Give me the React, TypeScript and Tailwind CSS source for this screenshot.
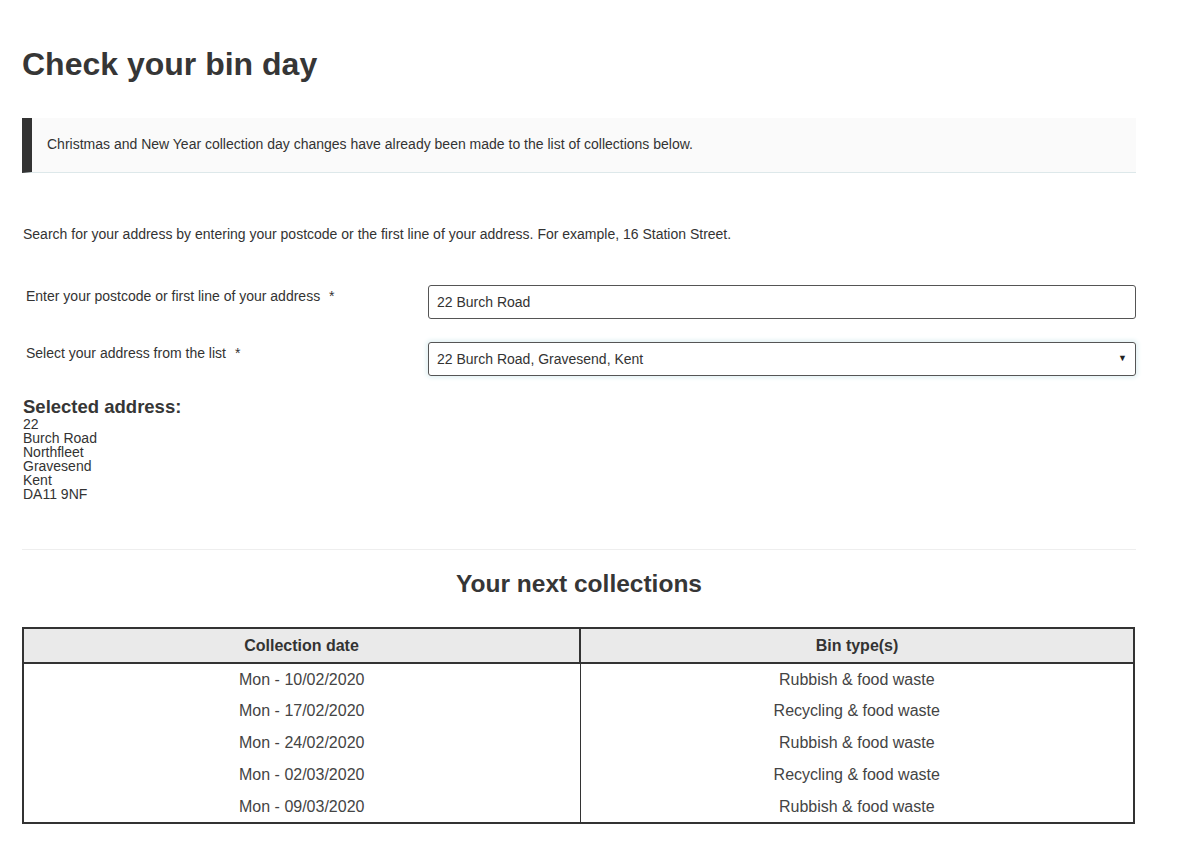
const address = ['22', 'Burch Road', 'Northfleet', 'Gravesend', 'Kent', 'DA11 9NF'];

const collections = [
  { date: 'Mon - 10/02/2020', bins: 'Rubbish & food waste' },
  { date: 'Mon - 17/02/2020', bins: 'Recycling & food waste' },
  { date: 'Mon - 24/02/2020', bins: 'Rubbish & food waste' },
  { date: 'Mon - 02/03/2020', bins: 'Recycling & food waste' },
  { date: 'Mon - 09/03/2020', bins: 'Rubbish & food waste' },
];

export default function App() {
  return (
    <div className="min-h-screen bg-white font-['Liberation_Sans',Arial,sans-serif] text-[#333]">
      <div className="w-[1114px] ml-[22px] pt-[45px] pb-[34px]">
        {/* Title */}
        <h1 className="text-[32px] leading-[38px] font-bold text-[#363636]">Check your bin day</h1>

        {/* Notice */}
        <div className="mt-[35px] flex h-[55px] items-center border-l-[10px] border-[#333] bg-[#fafafa] border-b border-b-[#dde8ea] pl-[15px] pb-[2px] text-[14px] text-[#333]">
          Christmas and New Year collection day changes have already been made to the list of collections below.
        </div>

        <p className="mt-[53px] pl-[1px] text-[14px] leading-[16px] text-[#333]">
          Search for your address by entering your postcode or the first line of your address. For example, 16 Station Street.
        </p>

        {/* Form */}
        <div className="mt-[43px] flex flex-col gap-[23px]">
          <div className="grid grid-cols-[406px_1fr]">
            <label className="pl-[4px] pt-[3px] text-[14px] leading-[16px] text-[#333]">
              Enter your postcode or first line of your address <span className="ml-[5px]">*</span>
            </label>
            <div className="flex h-[34px] items-center rounded-[3px] border border-[#555] px-[8px] text-[14px] text-[#333]">
              22 Burch Road
            </div>
          </div>
          <div className="grid grid-cols-[406px_1fr]">
            <label className="pl-[4px] pt-[3px] text-[14px] leading-[16px] text-[#333]">
              Select your address from the list <span className="ml-[5px]">*</span>
            </label>
            <div className="flex h-[34px] items-center justify-between rounded-[3px] border border-[#555] px-[8px] text-[14px] text-[#333] shadow-[0_0_4px_2px_#e3f1f3]">
              <span>22 Burch Road, Gravesend, Kent</span>
              <span className="text-[9px] text-[#222]">▼</span>
            </div>
          </div>
        </div>

        {/* Selected address */}
        <div className="mt-[21px] pl-[1px]">
          <h3 className="text-[18.5px] leading-[20px] font-bold text-[#363636]">Selected address:</h3>
          <div className="text-[14px] leading-[14px] text-[#333]">
            {address.map((l) => (
              <div key={l}>{l}</div>
            ))}
          </div>
        </div>

        <hr className="mt-[48px] border-t border-[#eee]" />

        <h2 className="mt-[20px] text-center text-[24.5px] leading-[28px] font-bold text-[#363636]">Your next collections</h2>

        {/* Table */}
        <table className="mt-[29px] w-[1113px] border-collapse border-2 border-[#333] text-[16px] text-[#444]">
          <thead>
            <tr className="h-[35px] bg-[#eaeaea]">
              <th className="w-[557px] border-2 border-[#333] font-bold text-[#333]">Collection date</th>
              <th className="border-2 border-[#333] font-bold text-[#333]">Bin type(s)</th>
            </tr>
          </thead>
          <tbody>
            {collections.map((c, i) => (
              <tr key={i} className="h-[32px]">
                <td className="border-r border-[#333] text-center">{c.date}</td>
                <td className="text-center">{c.bins}</td>
              </tr>
            ))}
          </tbody>
        </table>
      </div>
    </div>
  );
}
